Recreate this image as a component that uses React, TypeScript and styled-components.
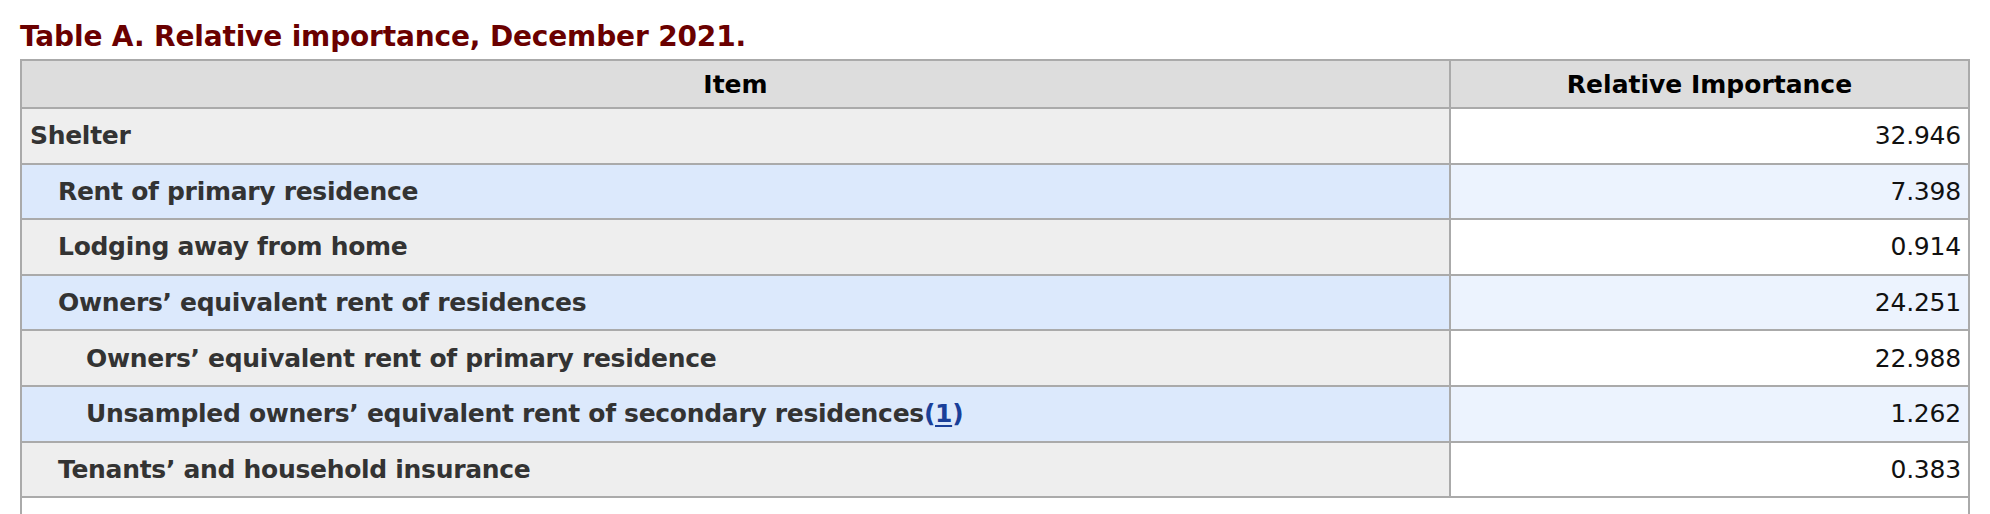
import React from 'react'
import styled, { createGlobalStyle } from 'styled-components'

const GlobalStyle = createGlobalStyle`
  html, body {
    margin: 0;
    padding: 0;
    background: #ffffff;
  }
`

const Page = styled.div`
  padding: 20px 20px 0 20px;
  font-family: "DejaVu Sans", Verdana, sans-serif;
`

const Caption = styled.h2`
  margin: 0 0 5px 0;
  font-size: 28px;
  line-height: 34px;
  letter-spacing: -0.15px;
  font-weight: bold;
  color: #6a0000;
`

const Table = styled.table`
  width: 1950px;
  table-layout: fixed;
  border-collapse: separate;
  border-spacing: 0;
  border-top: 2px solid #aaaaaa;
  border-left: 2px solid #aaaaaa;
  font-size: 25px;
`

const HeadCell = styled.th<{ $width?: number }>`
  box-sizing: border-box;
  ${p => (p.$width ? `width: ${p.$width}px;` : '')}
  height: 48px;
  padding: 0 8px;
  background: #dddddd;
  border-right: 2px solid #aaaaaa;
  border-bottom: 2px solid #aaaaaa;
  color: #000000;
  font-weight: bold;
  text-align: center;
  vertical-align: middle;
`

const ItemCell = styled.th<{ $level: number; $alt: boolean }>`
  box-sizing: border-box;
  height: 55.6px;
  padding: 0 8px 0 ${p => 8 + p.$level * 28}px;
  background: ${p => (p.$alt ? '#dce9fc' : '#eeeeee')};
  border-right: 2px solid #aaaaaa;
  border-bottom: 2px solid #aaaaaa;
  color: #333333;
  font-weight: bold;
  letter-spacing: -0.3px;
  text-align: left;
  vertical-align: middle;
  white-space: nowrap;
`

const ValueCell = styled.td<{ $alt: boolean }>`
  box-sizing: border-box;
  height: 55.6px;
  padding: 0 7px 0 8px;
  background: ${p => (p.$alt ? '#ecf3fe' : '#ffffff')};
  border-right: 2px solid #aaaaaa;
  border-bottom: 2px solid #aaaaaa;
  color: #111111;
  letter-spacing: -0.2px;
  text-align: right;
  vertical-align: middle;
`

const NoteCell = styled.td`
  box-sizing: border-box;
  height: 60px;
  padding: 0;
  background: #ffffff;
  border-right: 2px solid #aaaaaa;
  border-bottom: 2px solid #aaaaaa;
`

const FootnoteRef = styled.span`
  color: #1a3f99;
`

const FootnoteLink = styled.a`
  color: inherit;
  text-decoration: underline;
  text-underline-offset: 3px;
`

type Row = { item: string; level: number; value: string; note?: string }

const rows: Row[] = [
  { item: 'Shelter', level: 0, value: '32.946' },
  { item: 'Rent of primary residence', level: 1, value: '7.398' },
  { item: 'Lodging away from home', level: 1, value: '0.914' },
  { item: 'Owners\u2019 equivalent rent of residences', level: 1, value: '24.251' },
  { item: 'Owners\u2019 equivalent rent of primary residence', level: 2, value: '22.988' },
  {
    item: 'Unsampled owners\u2019 equivalent rent of secondary residences',
    level: 2,
    value: '1.262',
    note: '1',
  },
  { item: 'Tenants\u2019 and household insurance', level: 1, value: '0.383' },
]

export default function App() {
  return (
    <Page>
      <GlobalStyle />
      <Caption>Table A. Relative importance, December 2021.</Caption>
      <Table>
        <thead>
          <tr>
            <HeadCell>Item</HeadCell>
            <HeadCell $width={519}>Relative Importance</HeadCell>
          </tr>
        </thead>
        <tbody>
          {rows.map((row, i) => (
            <tr key={row.item}>
              <ItemCell $level={row.level} $alt={i % 2 === 1}>
                {row.item}
                {row.note && (
                  <FootnoteRef>
                    (<FootnoteLink href={`#footnote-${row.note}`}>{row.note}</FootnoteLink>)
                  </FootnoteRef>
                )}
              </ItemCell>
              <ValueCell $alt={i % 2 === 1}>{row.value}</ValueCell>
            </tr>
          ))}
          <tr>
            <NoteCell colSpan={2}>&nbsp;</NoteCell>
          </tr>
        </tbody>
      </Table>
    </Page>
  )
}
